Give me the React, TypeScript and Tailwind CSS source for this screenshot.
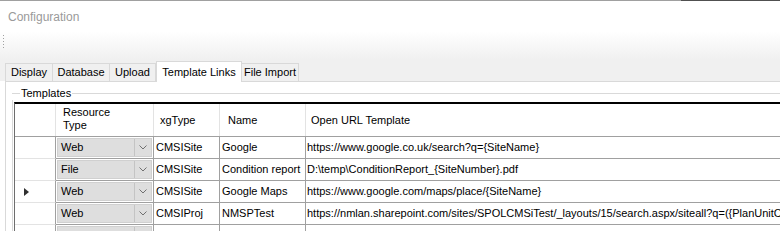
import React from 'react'

const font = { fontFamily: '"Liberation Sans", Arial, sans-serif' }

const tabs = [
  { label: 'Display', w: 'w-[48px]' },
  { label: 'Database', w: 'w-[57px]' },
  { label: 'Upload', w: 'w-[46px]' },
  { label: 'Template Links', w: 'w-[86px]', active: true },
  { label: 'File Import', w: 'w-[57px]' },
]

const rows = [
  { type: 'Web', xg: 'CMSISite', name: 'Google', url: 'https://www.google.co.uk/search?q={SiteName}' },
  { type: 'File', xg: 'CMSISite', name: 'Condition report', url: 'D:\\temp\\ConditionReport_{SiteNumber}.pdf' },
  { type: 'Web', xg: 'CMSISite', name: 'Google Maps', url: 'https://www.google.com/maps/place/{SiteName}', current: true },
  { type: 'Web', xg: 'CMSIProj', name: 'NMSPTest', url: 'https://nmlan.sharepoint.com/sites/SPOLCMSiTest/_layouts/15/search.aspx/siteall?q=({PlanUnitCode})' },
  { type: '', xg: '', name: '', url: '' },
]

function Chevron() {
  return (
    <svg width="8" height="5" viewBox="0 0 8 5" className="block">
      <path d="M0.5 0.5 L4 4 L7.5 0.5" fill="none" stroke="#707070" strokeWidth="1" />
    </svg>
  )
}

function Row({ r }: { r: typeof rows[number] }) {
  return (
    <div className="flex h-[22px] shrink-0 text-[11px] text-black whitespace-nowrap">
      <div className="w-[41px] shrink-0 border-r border-b border-r-[#a0a0a0] border-b-[#e3e3e3] flex items-center pl-[9px]">
        {r.current && (
          <svg width="5" height="8" viewBox="0 0 5 8"><path d="M0 0 L5 4 L0 8 Z" fill="#303030" /></svg>
        )}
      </div>
      <div className="w-[98px] shrink-0 border-r border-b border-[#a0a0a0] p-[1px]">
        <div className="h-full flex bg-[#dedede] border border-[#d0d0d0]">
          <div className="flex-1 flex items-center pl-[3px]">{r.type}</div>
          <div className="w-[17px] border-l border-[#c4c4c4] flex items-center justify-center">
            <Chevron />
          </div>
        </div>
      </div>
      <div className="w-[66px] shrink-0 border-r border-b border-[#a0a0a0] flex items-center pl-[2px]">{r.xg}</div>
      <div className="w-[86px] shrink-0 border-r border-b border-[#a0a0a0] flex items-center pl-[2px] overflow-hidden">{r.name}</div>
      <div className="flex-1 min-w-0 border-b border-[#a0a0a0] flex items-center pl-[1px] overflow-hidden">{r.url}</div>
    </div>
  )
}

export default function App() {
  return (
    <div className="w-[780px] h-[231px] overflow-hidden bg-white flex flex-col" style={font}>
      <div className="flex h-px shrink-0">
        <div className="w-[681px] bg-[#a0a0a0]" />
        <div className="flex-1 bg-[#505050]" />
      </div>
      <div className="h-[30px] shrink-0 pl-[8px] pt-[7px] text-[12px] text-[#9a9a9a]">Configuration</div>
      <div className="h-[29px] shrink-0 bg-gradient-to-b from-white to-[#f0f0f0] flex items-start pl-[3px] pt-[4px]">
        <div className="flex flex-col gap-[2px]">
          {[0, 1, 2, 3, 4].map(i => (
            <div key={i} className="w-px h-px bg-[#a0a0a0]" />
          ))}
        </div>
      </div>
      <div className="h-[21px] shrink-0 bg-[#f0f0f0] flex items-end pl-[5px] text-[11px] text-black whitespace-nowrap">
        {tabs.map(t =>
          t.active ? (
            <div key={t.label} className={`${t.w} h-[21px] -mb-px bg-white border border-b-0 border-[#d9d9d9] flex items-center justify-center relative z-10`}>
              {t.label}
            </div>
          ) : (
            <div key={t.label} className={`${t.w} h-[18px] border-t border-r border-[#d9d9d9] first:border-l flex items-center justify-center`}>
              {t.label}
            </div>
          )
        )}
      </div>
      <div className="flex-1 ml-[5px] border-l border-t border-[#d9d9d9] bg-white flex flex-col pl-[6px] pt-[4px]">
        <div className="flex items-center h-[14px] shrink-0">
          <div className="w-[8px] border-t border-[#d9d9d9]" />
          <span className="px-[1px] text-[11px] text-black leading-none">Templates</span>
          <div className="flex-1 border-t border-[#d9d9d9]" />
        </div>
        <div className="flex-1 border-l border-[#d9d9d9] pl-[1px] pt-[2px] flex flex-col min-h-0">
          <div className="flex-1 border-l border-t-2 border-l-[#6d6d6d] border-t-black flex flex-col min-h-0">
            <div className="flex h-[33px] shrink-0 text-[11px] text-black border-b border-[#a0a0a0]">
              <div className="w-[41px] shrink-0 border-r border-[#e3e3e3]" />
              <div className="w-[98px] shrink-0 border-r border-[#e3e3e3] pl-[7px] pt-[2px] leading-[13px]">
                Resource
                <br />
                Type
              </div>
              <div className="w-[66px] shrink-0 border-r border-[#e3e3e3] flex items-center pl-[6px]">xgType</div>
              <div className="w-[86px] shrink-0 border-r border-[#e3e3e3] flex items-center pl-[8px]">Name</div>
              <div className="flex-1 flex items-center pl-[5px]">Open URL Template</div>
            </div>
            {rows.map((r, i) => (
              <Row key={i} r={r} />
            ))}
          </div>
        </div>
      </div>
    </div>
  )
}
